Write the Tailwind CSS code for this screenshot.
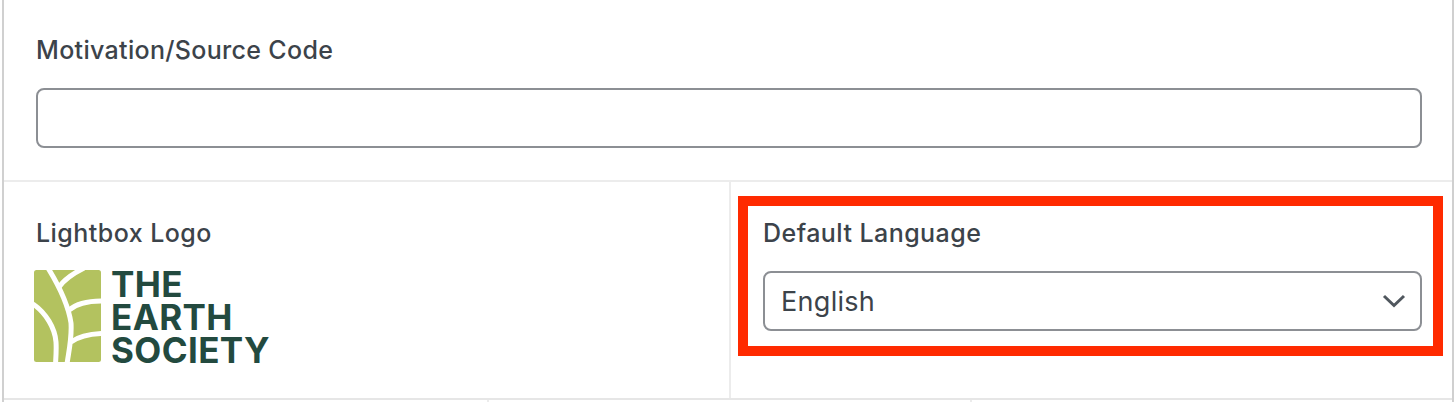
<!DOCTYPE html>
<html lang="en">
<head>
<meta charset="utf-8">
<script src="https://cdn.jsdelivr.net/npm/@tailwindcss/browser@4"></script>
</head>
<body class="bg-white">
<main class="relative w-[1456px] h-[402px] overflow-hidden pl-[2px] font-['Inter',sans-serif] text-[#3c434a]">
  <div class="w-[1452px] border-x-2 border-x-[#d0d0d0] h-[402px] flex flex-col">
    <section class="h-[182px] border-b-2 border-[#ececec] pl-[32px] pr-[30px] pt-[35px]">
      <label class="block text-[25px] leading-[30px] font-[450] tracking-[0.32px]">Motivation/Source Code</label>
      <div class="mt-[23px] h-[60px] rounded-[8px] border-2 border-[#8c8f94] bg-white"></div>
    </section>
    <section class="flex h-[218px] border-b-2 border-[#e6e6e6]">
      <div class="w-[725px] pl-[32px] pt-[36px]">
        <div class="text-[25px] leading-[30px] font-[450] tracking-[0.45px]">Lightbox Logo</div>
        <div class="flex mt-[22px] -ml-[2px] items-start">
          <svg width="67" height="92" viewBox="0 0 67 92" class="shrink-0">
            <rect width="67" height="92" rx="2.5" fill="#b3c25f"/>
            <g fill="none" stroke="#fff" stroke-width="5">
              <path d="M14 -2C22 11 34 33 37 53C38 68 35 80 33 94"/>
              <path d="M-1 34C12 43 21 58 22 72C22.500 80 22 87 21.500 94"/>
              <path d="M25 17C30 10 38 4 50 -2"/>
              <path d="M35 40C42 34 54 31 68 31"/>
              <path d="M37 72C44 67 55 64 68 63.500"/>
            </g>
          </svg>
          <div class="ml-[10px] -mt-[2px] text-[35px] leading-[33px] font-bold text-[#234a3f] tracking-[0.4px]">THE<br>EARTH<br>SOCIETY</div>
        </div>
      </div>
      <div class="flex-1 border-l-2 border-[#ececec] pl-[32px] pr-[30px] pt-[36px]">
        <div class="text-[25px] leading-[30px] font-[450] tracking-[0.45px]">Default Language</div>
        <div class="mt-[23px] h-[60px] rounded-[8px] border-2 border-[#8c8f94] bg-white flex items-center justify-between pl-[16px] pr-[14px]">
          <span class="text-[27px] leading-[30px] tracking-[0.3px] pt-[1px]">English</span>
          <svg width="24" height="14" viewBox="0 0 24 14"><path d="M2 2L12 11.500L22 2" fill="none" stroke="#50575e" stroke-width="3"/></svg>
        </div>
      </div>
    </section>
    <div class="flex h-[2px]">
      <div class="w-[485px] border-r-2 border-[#ececec]"></div>
      <div class="w-[483px] border-r-2 border-[#ececec]"></div>
    </div>
  </div>
  <div class="absolute left-[738px] top-[196px] w-[705px] h-[160px] border-[10px] border-[#ff2a00]"></div>
</main>
</body>
</html>
